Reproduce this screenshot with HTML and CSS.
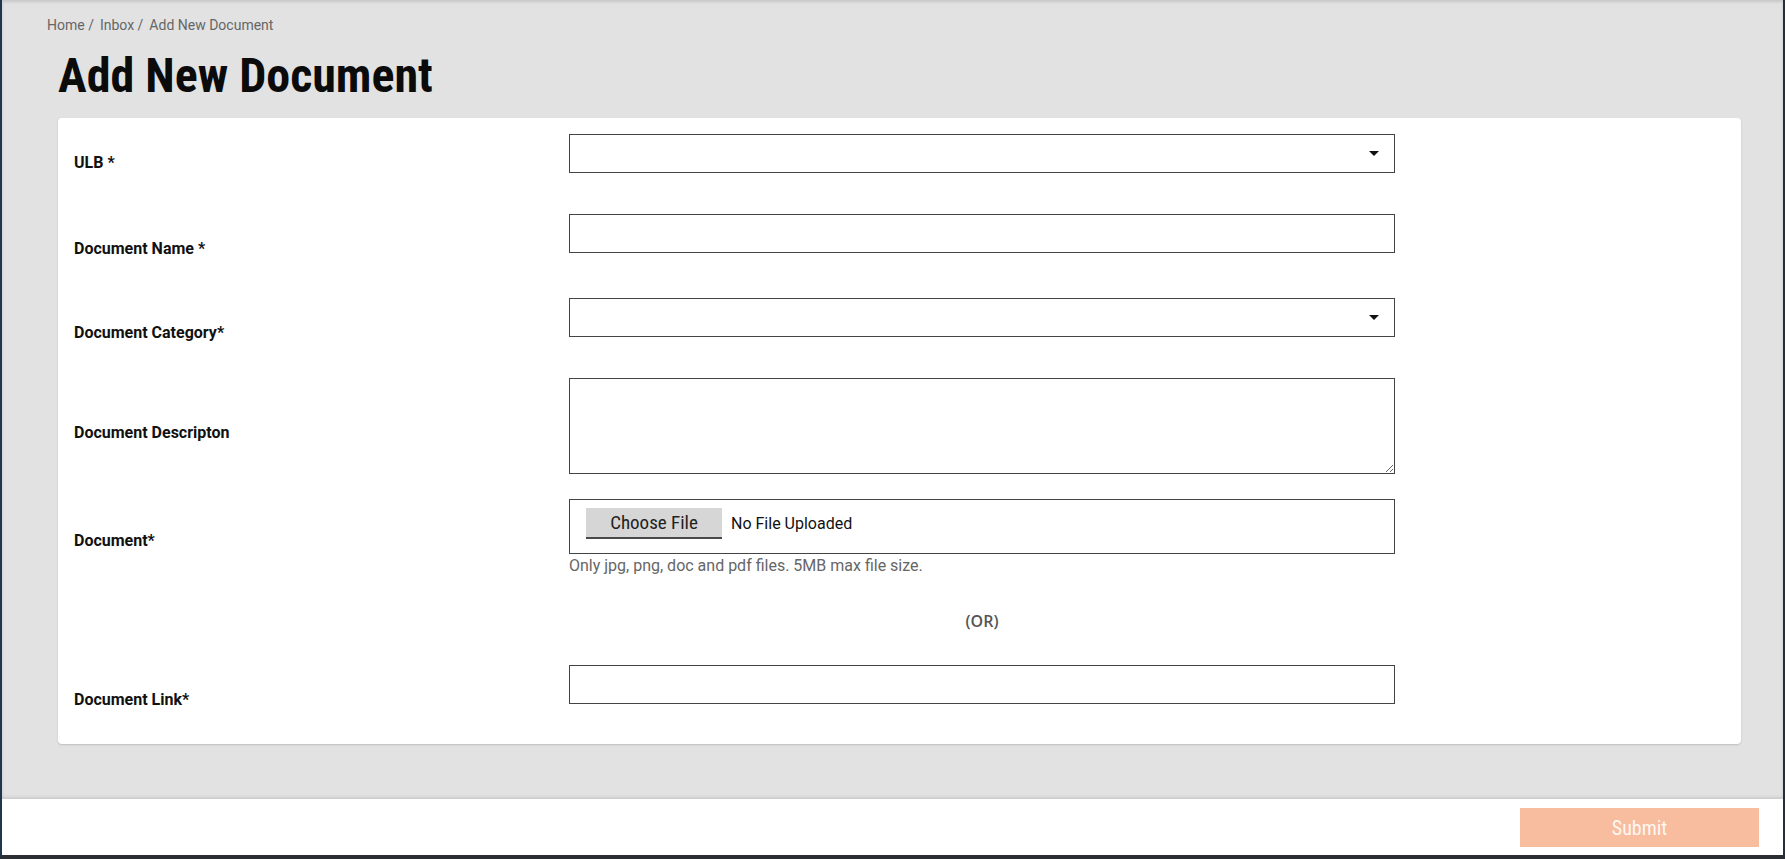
FILE: index.html
```html
<!DOCTYPE html>
<html lang="en">
<head>
<meta charset="utf-8">
<title>Add New Document</title>
<link rel="stylesheet" href="styles.css">
</head>
<body>
<span class="accent"></span>
<main class="main">
  <ul class="breadcrumb">
    <li>Home /</li>
    <li>Inbox /</li>
    <li>Add New Document</li>
  </ul>
  <h1 class="title">Add New Document</h1>
  <section class="card">
    <div class="row">
      <label class="label label-first">ULB *</label>
      <div class="field input select">
        <svg class="caret" width="10" height="5" viewBox="0 0 10 5"><path d="M0 0H10L5 5Z" fill="#111"/></svg>
      </div>
    </div>
    <div class="row row-gap-41">
      <label class="label">Document Name *</label>
      <input class="field input" type="text">
    </div>
    <div class="row row-gap-40">
      <label class="label">Document Category*</label>
      <div class="field input select">
        <svg class="caret" width="10" height="5" viewBox="0 0 10 5"><path d="M0 0H10L5 5Z" fill="#111"/></svg>
      </div>
    </div>
    <div class="row row-gap-36">
      <label class="label label-tall">Document Descripton</label>
      <textarea class="field input textarea"></textarea>
    </div>
    <div class="row row-gap-25">
      <label class="label label-file">Document*</label>
      <div class="field">
        <div class="file-box">
          <button class="choose" type="button">Choose File</button>
          <span class="file-name">No File Uploaded</span>
        </div>
        <div class="hint">Only jpg, png, doc and pdf files. 5MB max file size.</div>
      </div>
    </div>
    <div class="row row-gap-37">
      <div class="or">(OR)</div>
    </div>
    <div class="row row-gap-34">
      <label class="label">Document Link*</label>
      <input class="field input" type="text">
    </div>
  </section>
</main>
<footer class="footer">
  <button class="submit" type="button">Submit</button>
</footer>
</body>
</html>
```
FILE: styles.css
```css
* {
  box-sizing: border-box;
}

html {
  margin: 0;
  height: 100%;
}

body {
  margin: 0;
  height: 100vh;
  background: #e2e2e2;
  border-left: 2px solid #1f3550;
  border-right: 2px solid #262d36;
  border-bottom: 4px solid #2b2e33;
  display: flex;
  flex-direction: column;
  font-family: Roboto, "Liberation Sans", sans-serif;
  position: relative;
  overflow: hidden;
}

.accent {
  position: absolute;
  left: -2px;
  top: 19px;
  width: 2px;
  height: 24px;
  background: #f47b3b;
}

.main {
  flex: 1;
  padding: 17px 42px 0 45px;
  box-shadow: inset 0 2px 3px rgba(0, 0, 0, 0.12);
}

.breadcrumb {
  display: flex;
  gap: 6px;
  margin: 0;
  padding: 0;
  list-style: none;
  font-size: 14px;
  line-height: 16px;
  color: #666;
}

.title {
  margin: 15px 0 14px 11px;
  font-family: "Roboto Condensed", Roboto, sans-serif;
  font-stretch: condensed;
  font-weight: 700;
  font-size: 48px;
  line-height: 56px;
  color: #0b0b0b;
}

.card {
  margin-left: 11px;
  background: #fff;
  border-radius: 4px;
  box-shadow: 0 1px 2px rgba(0, 0, 0, 0.16);
  padding: 16px 0 35px;
}

.row {
  display: grid;
  grid-template-columns: 511px 826px;
  align-items: start;
}

.row-gap-41 { margin-top: 41px; }
.row-gap-40 { margin-top: 40px; }
.row-gap-36 { margin-top: 36px; }
.row-gap-25 { margin-top: 25px; }
.row-gap-37 { margin-top: 37px; }
.row-gap-34 { margin-top: 34px; }

.label {
  padding: 25px 0 0 16px;
  font-size: 16px;
  line-height: 19px;
  font-weight: 700;
  color: #111;
}

.label-first { padding-top: 19px; }
.label-tall { padding-top: 45px; }
.label-file { padding-top: 32px; }

.field {
  grid-column: 2;
}

.input {
  display: block;
  width: 100%;
  height: 39px;
  margin: 0;
  border: 1px solid #444;
  border-radius: 0;
  background: #fff;
  font-family: Roboto, sans-serif;
  font-size: 16px;
}

.select {
  display: flex;
  align-items: center;
  justify-content: flex-end;
  padding-right: 15px;
}

.caret {
  display: block;
}

.textarea {
  height: 96px;
  resize: vertical;
}

.file-box {
  height: 55px;
  border: 1px solid #444;
  display: flex;
  align-items: flex-start;
  gap: 9px;
  padding: 8px 0 0 16px;
}

.choose {
  width: 136px;
  height: 31px;
  margin: 0;
  padding: 0;
  background: #d6d6d6;
  border: 0;
  border-bottom: 2px solid #4a4a4a;
  font-family: "Roboto Condensed", Roboto, sans-serif;
  font-stretch: condensed;
  font-size: 19px;
  color: #222;
}

.file-name {
  font-size: 16px;
  line-height: 31px;
  color: #111;
}

.hint {
  margin-top: 2px;
  font-size: 16px;
  line-height: 19px;
  color: #666;
}

.or {
  grid-column: 2;
  text-align: center;
  font-family: "Open Sans", Roboto, sans-serif;
  font-weight: 600;
  font-size: 16px;
  line-height: 19px;
  color: #555;
}

.footer {
  position: relative;
  height: 56px;
  background: #fff;
  display: flex;
  justify-content: flex-end;
  align-items: flex-start;
  padding: 9px 24px 0 0;
  box-shadow: 0 -2px 3px rgba(0, 0, 0, 0.1);
}

.submit {
  width: 239px;
  height: 39px;
  margin: 0;
  background: #f8bc9f;
  color: #fff8f2;
  border: 0;
  font-family: "Roboto Condensed", Roboto, sans-serif;
  font-stretch: condensed;
  font-weight: 400;
  font-size: 20px;
}
```
